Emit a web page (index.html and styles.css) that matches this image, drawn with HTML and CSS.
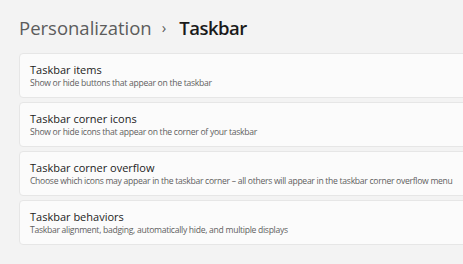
FILE: index.html
```html
<!DOCTYPE html>
<html lang="en">
<head>
    <meta charset="UTF-8">
    <meta name="viewport" content="width=device-width, initial-scale=1.0">
    <title>Taskbar</title>
    <link rel="stylesheet" href="styles.css">
</head>
<body>
    <div class="page">
        <h1 class="breadcrumb">
            <span class="breadcrumb__parent">Personalization</span>
            <span class="breadcrumb__sep">&rsaquo;</span>
            <span class="breadcrumb__current">Taskbar</span>
        </h1>
        <div class="settings">
            <div class="setting">
                <div class="setting__title">Taskbar items</div>
                <div class="setting__desc">Show or hide buttons that appear on the taskbar</div>
            </div>
            <div class="setting">
                <div class="setting__title">Taskbar corner icons</div>
                <div class="setting__desc">Show or hide icons that appear on the corner of your taskbar</div>
            </div>
            <div class="setting">
                <div class="setting__title">Taskbar corner overflow</div>
                <div class="setting__desc">Choose which icons may appear in the taskbar corner – all others will appear in the taskbar corner overflow menu</div>
            </div>
            <div class="setting">
                <div class="setting__title">Taskbar behaviors</div>
                <div class="setting__desc">Taskbar alignment, badging, automatically hide, and multiple displays</div>
            </div>
        </div>
    </div>
</body>
</html>
```

FILE: styles.css
```css
html {
    box-sizing: border-box;
}
*, *::before, *::after {
    box-sizing: inherit;
}
body {
    margin: 0;
    background: #f3f3f3;
    font-family: "Open Sans", "Noto Sans", sans-serif;
    overflow: hidden;
}
.page {
    width: 480px;
    padding: 12px 0 0 19px;
}
.breadcrumb {
    margin: 0;
    display: flex;
    align-items: center;
    height: 30px;
    font-size: 18.5px;
    font-weight: 400;
    white-space: nowrap;
}
.breadcrumb__parent {
    color: #5c5c5c;
}
.breadcrumb__sep {
    color: #5c5c5c;
    font-size: 15px;
    margin: 0 13px 0 10px;
}
.breadcrumb__current {
    color: #1a1a1a;
    font-weight: 600;
    letter-spacing: -0.5px;
}
.settings {
    display: flex;
    flex-direction: column;
    gap: 4px;
    margin-top: 11px;
}
.setting {
    height: 45px;
    background: #fbfbfb;
    border: 1px solid #e6e6e6;
    border-radius: 4px;
    padding: 0 10px;
    display: flex;
    flex-direction: column;
    justify-content: center;
    white-space: nowrap;
}
.setting__title {
    font-size: 11px;
    line-height: 14px;
    color: #1b1b1b;
    padding-top: 1px;
}
.setting__desc {
    font-size: 8.6px;
    line-height: 12px;
    letter-spacing: -0.29px;
    color: #5f5f5f;
}
```
